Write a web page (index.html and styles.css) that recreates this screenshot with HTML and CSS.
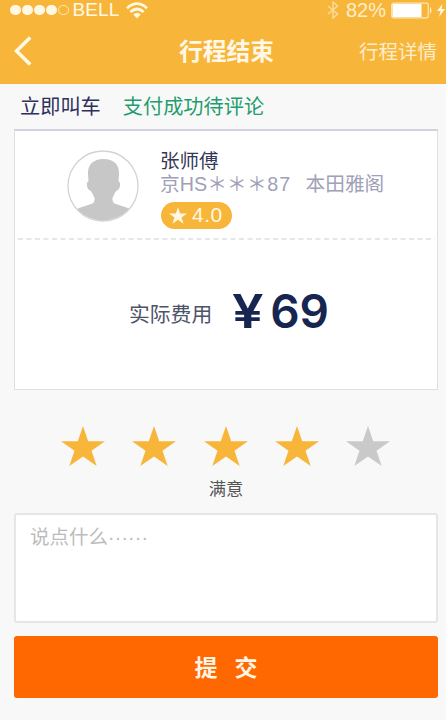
FILE: index.html
```html
<!DOCTYPE html>
<html lang="zh-CN">
<head>
<meta charset="utf-8">
<title>行程结束</title>
<link rel="stylesheet" href="styles.css">
</head>
<body>
<svg width="0" height="0" class="defs"><symbol id="star" viewBox="0 0 44 40"><path d="M22 0L27.2 15.2H44L30.5 24.7L35.7 40L22 30.5L8.3 40L13.5 24.7L0 15.2H16.8Z" fill="currentColor"/></symbol></svg>
<header class="header">
  <div class="status">
    <div class="dots"><i></i><i></i><i></i><i></i><i class="empty"></i></div>
    <span class="carrier">BELL</span>
    <svg class="wifi" width="22" height="17" viewBox="0 0 22 17" fill="none" stroke="#fff8e4" stroke-width="2.7"><path d="M1 6.2Q11-2.8 21 6.2M4.4 10Q11 4 17.6 10"/><path d="M7.3 12.6Q11 9 14.7 12.6L11 16.6Z" fill="#fff8e4" stroke="none"/></svg>
    <svg class="bluetooth" width="12" height="18" viewBox="0 0 12 18" fill="none" stroke="#fbdc9f" stroke-width="1.4"><path d="M1 5L10.5 13L6 17V1L10.5 5L1 13"/></svg>
    <span class="percent">82%</span>
    <svg class="battery" width="42" height="17" viewBox="0 0 42 17"><rect x=".7" y="1.2" width="36.6" height="14.6" rx="2" fill="none" stroke="#fde7b9" stroke-width="1.2"/><rect x="1.500" y="2" width="29" height="13" fill="#fff"/><path d="M39 5Q42 8.5 39 12Z" fill="#fff3d6"/></svg>
    <svg class="bolt" width="8" height="13" viewBox="0 0 8 13"><path d="M5.5 0L0 7H3.5L2 13L8 5H4.5Z" fill="#fff8e4"/></svg>
  </div>
  <nav class="nav">
    <svg width="18" height="30" viewBox="0 0 18 30" fill="none" stroke="#fff8e4" stroke-width="3.6"><path d="M16.2 1.5L2.5 15L16.2 28.5"/></svg>
    <h1>行程结束</h1>
    <a class="details">行程详情</a>
  </nav>
</header>
<main>
  <div class="tabs"><span>立即叫车</span><span class="paid">支付成功待评论</span></div>
  <section class="card">
    <div class="driver">
      <svg class="avatar" width="72" height="72" viewBox="0 0 72 72"><clipPath id="face"><circle cx="36" cy="36" r="34.5"/></clipPath><circle cx="36" cy="36" r="35" fill="#fff" stroke="#d3d3d3" stroke-width="1.3"/><path clip-path="url(#face)" fill="#c7c7c7" d="M36.500 9C26 9 20.500 15 21 24L21.500 31.500C18.500 32 20 39.500 23 40.500C24.500 41 26 45 27.500 48Q28 52 25.500 53.500C20 55.500 13 57 8 60V72H65V60C60 57 53 55.500 47.500 53.500Q45 52 45.500 48C47 45 48.500 41 50 40.500C53 39.500 54.500 32 51.500 31.500L52 24C52.500 15 47 9 36.500 9Z"/></svg>
      <div class="info">
        <div class="name">张师傅</div>
        <div class="car"><span class="plate">京HS＊＊＊<span class="tail">87</span></span><span>本田雅阁</span></div>
        <div class="score"><svg width="18" height="17"><use href="#star"/></svg><span>4.0</span></div>
      </div>
    </div>
    <svg class="divider" width="422" height="2"><path d="M3 1H420" stroke="#dfdfdf" stroke-width="1.5" stroke-dasharray="5 3.5"/></svg>
    <div class="cost"><span>实际费用</span><strong><span class="yen">¥</span>69</strong></div>
  </section>
  <div class="stars">
    <svg><use href="#star"/></svg><svg><use href="#star"/></svg><svg><use href="#star"/></svg><svg><use href="#star"/></svg><svg class="off"><use href="#star"/></svg>
  </div>
  <div class="verdict">满意</div>
  <div class="comment">说点什么<span>······</span></div>
  <button class="submit"><span>提</span><span>交</span></button>
</main>
</body>
</html>
```
FILE: styles.css
```css
* { box-sizing: border-box; }
body {
  margin: 0;
  width: 446px;
  height: 720px;
  overflow: hidden;
  background: #f8f8f8;
  font-family: "Liberation Sans", "Noto Sans CJK SC", sans-serif;
}
.defs { display: block; height: 0; }
.header { height: 84px; background: #f7b63a; color: #fff8e8; }
.status { display: flex; height: 20px; padding: 0 1px 0 10px; align-items: center; }
.dots { display: flex; gap: 1.5px; }
.dots i { width: 10.5px; height: 10.5px; border-radius: 50%; background: #fff8e4; }
.dots .empty { background: none; border: 1px solid #fde7b9; }
.carrier { margin-left: 4px; width: 49px; font-size: 19px; line-height: 20px; letter-spacing: .1px; }
.wifi { margin-left: 4px; }
.bluetooth { margin-left: auto; }
.percent { width: 43px; margin-left: 7px; font-size: 20px; line-height: 18px; padding-bottom: 1px; color: #fdedcd; }
.battery { margin-left: 2px; }
.bolt { margin-left: 4px; }
.nav { display: grid; grid-template-columns: 100px 1fr 100px; height: 62px; align-items: center; padding: 0 9px 0 14px; }
.nav h1 { margin: 2px 0 0 2px; text-align: center; font-size: 23.800px; line-height: 30px; font-weight: 700; }
.details { margin-top: 2px; font-size: 19.500px; line-height: 30px; text-align: right; white-space: nowrap; color: #fdedcd; }
main { padding: 0 8px 0 14px; }
.tabs { display: flex; gap: 22px; height: 45px; padding: 1px 0 0 6px; align-items: center; font-size: 20.200px; line-height: 30px; color: #2e315c; }
.paid { color: #1f9d6e; }
.card { height: 261px; background: #fff; border: 1px solid #dedee4; border-top: 2px solid #d2d2de; }
.driver { display: flex; height: 107px; padding: 19px 0 0 52px; }
.info { margin-left: 21px; }
.avatar { display: block; }
.name { height: 23px; font-size: 19.500px; line-height: 23px; color: #343858; }
.car { display: flex; gap: 14px; height: 23px; font-size: 19.700px; line-height: 23px; color: #a0a0b8; white-space: nowrap; }
.plate { letter-spacing: .1px; }
.tail { letter-spacing: 1.2px; margin-left: .5px; }
.score { display: flex; align-items: center; gap: 5px; width: 71px; height: 27px; margin: 6px 0 0 1px; padding-left: 8px; border-radius: 14px; background: #f7b63a; color: #fff8e4; font-size: 21px; line-height: 26px; }
.score span { height: 27px; letter-spacing: .5px; }
.divider { display: block; }
.cost { display: flex; align-items: center; height: 149px; padding-left: 114px; color: #4d5368; font-size: 20.800px; line-height: 30px; }
.cost strong { display: flex; margin: -7px 0 0 20px; color: #162650; font: 600 46px/50px Inter, sans-serif; }
.yen { width: 38px; transform: scaleX(1.22); transform-origin: left; }
.stars { display: flex; justify-content: space-between; padding: 36px 48px 0 47px; color: #f7b63a; }
.stars svg { display: block; width: 44px; height: 40px; }
.stars .off { color: #c9c9c9; }
.verdict { margin-top: 10px; height: 24px; text-align: center; font-size: 17.300px; line-height: 26px; color: #555; }
.comment { height: 110px; margin-top: 13px; padding: 9px 14px; border: 2px solid #e6e6e6; border-radius: 3px; background: #fff; color: #bcbcbc; font-size: 19.500px; line-height: 26px; }
.comment span { letter-spacing: .2px; }
.submit { display: flex; justify-content: center; align-items: center; gap: 17px; width: 100%; height: 62px; margin-top: 13px; padding: 0 0 2px; border: 0; border-radius: 3px; background: #ff6700; color: #fff5e4; font: 700 23px/30px "Noto Sans CJK SC", sans-serif; }
```
